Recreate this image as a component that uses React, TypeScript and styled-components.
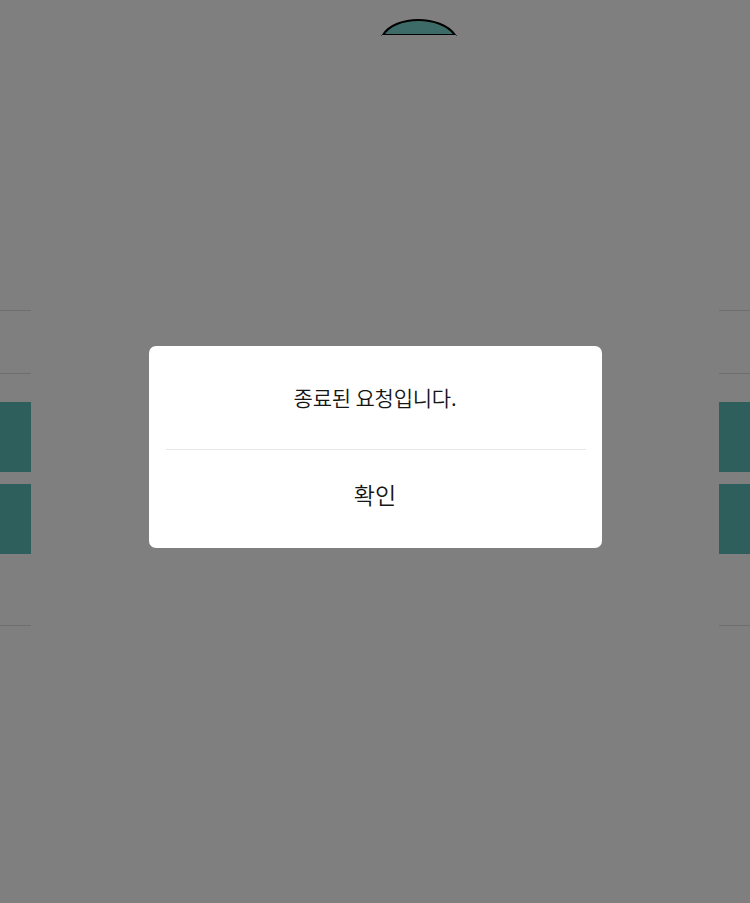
import React from 'react';
import styled, { createGlobalStyle } from 'styled-components';

const GlobalStyle = createGlobalStyle`
  html, body {
    margin: 0;
    padding: 0;
    background: #ffffff;
    font-family: "Noto Sans CJK KR", "Noto Sans", sans-serif;
  }
`;

const Page = styled.div`
  display: grid;
  grid-template-columns: 31px 1fr 31px;
  width: 750px;
  height: 903px;
  background: #ffffff;
  overflow: hidden;
`;

const Side = styled.div`
  display: flex;
  flex-direction: column;
  padding-top: 310px;
`;

const Center = styled.div`
  display: flex;
  justify-content: center;
  padding-top: 17px;
  padding-left: 88px;
`;

const Rule = styled.div<{ $gap: number }>`
  height: 1px;
  background: #dcdcdc;
  margin-bottom: ${(p) => p.$gap}px;
`;

const TealBlock = styled.div<{ $gap: number }>`
  height: 70px;
  background: #5ebeb8;
  margin-bottom: ${(p) => p.$gap}px;
`;

const Overlay = styled.div`
  position: fixed;
  inset: 0;
  background: rgba(0, 0, 0, 0.5);
  display: flex;
  align-items: center;
  justify-content: center;
`;

const Dialog = styled.div`
  width: 453px;
  margin-bottom: 9px;
  background: #ffffff;
  border-radius: 7px;
  display: flex;
  flex-direction: column;
`;

const Message = styled.p`
  margin: 0;
  height: 103px;
  display: flex;
  align-items: center;
  justify-content: center;
  padding-bottom: 2px;
  box-sizing: border-box;
  font-size: 21px;
  font-weight: 350;
  color: #151515;
  letter-spacing: -0.2px;
`;

const Divider = styled.hr`
  margin: 0 16px 0 17px;
  border: 0;
  height: 1px;
  background: #e6e6e6;
`;

const ConfirmButton = styled.button`
  height: 98px;
  border: 0;
  background: transparent;
  font-family: inherit;
  font-size: 23px;
  font-weight: 350;
  color: #151515;
  letter-spacing: 0;
  padding: 0 0 10px;
  cursor: pointer;
`;

const Dome = () => (
  <svg width="76" height="20" viewBox="0 0 76 20">
    <path d="M2 18 C 14 -2, 60 -2, 74 18 Z" fill="#7ad6d0" stroke="#000" strokeWidth="2" />
    <line x1="1" y1="18.5" x2="75" y2="18.5" stroke="#ffffff" strokeWidth="1" />
  </svg>
);

const SideColumn = () => (
  <Side>
    <Rule $gap={62} />
    <Rule $gap={28} />
    <TealBlock $gap={12} />
    <TealBlock $gap={71} />
    <Rule $gap={0} />
  </Side>
);

export default function App() {
  return (
    <>
      <GlobalStyle />
      <Page>
        <SideColumn />
        <Center>
          <div>
            <Dome />
          </div>
        </Center>
        <SideColumn />
      </Page>
      <Overlay>
        <Dialog role="dialog">
          <Message>종료된 요청입니다.</Message>
          <Divider />
          <ConfirmButton type="button">확인</ConfirmButton>
        </Dialog>
      </Overlay>
    </>
  );
}
